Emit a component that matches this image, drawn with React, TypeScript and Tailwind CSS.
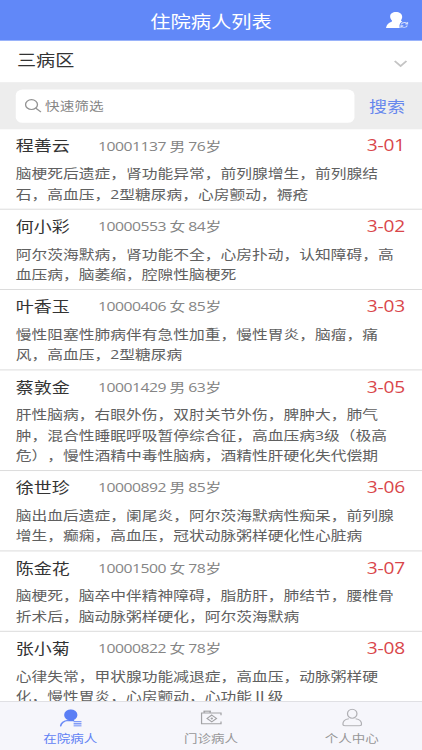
import React from 'react';

type Patient = { name: string; id: string; sex: string; age: number; bed: string; lines: string[] };

const patients: Patient[] = [
  { name: '程善云', id: '10001137', sex: '男', age: 76, bed: '3-01', lines: ['脑梗死后遗症，肾功能异常，前列腺增生，前列腺结', '石，高血压，2型糖尿病，心房颤动，褥疮'] },
  { name: '何小彩', id: '10000553', sex: '女', age: 84, bed: '3-02', lines: ['阿尔茨海默病，肾功能不全，心房扑动，认知障碍，高', '血压病，脑萎缩，腔隙性脑梗死'] },
  { name: '叶香玉', id: '10000406', sex: '女', age: 85, bed: '3-03', lines: ['慢性阻塞性肺病伴有急性加重，慢性胃炎，脑瘤，痛', '风，高血压，2型糖尿病'] },
  { name: '蔡敦金', id: '10001429', sex: '男', age: 63, bed: '3-05', lines: ['肝性脑病，右眼外伤，双肘关节外伤，脾肿大，肺气', '肿，混合性睡眠呼吸暂停综合征，高血压病3级（极高', '危），慢性酒精中毒性脑病，酒精性肝硬化失代偿期'] },
  { name: '徐世珍', id: '10000892', sex: '男', age: 85, bed: '3-06', lines: ['脑出血后遗症，阑尾炎，阿尔茨海默病性痴呆，前列腺', '增生，癫痫，高血压，冠状动脉粥样硬化性心脏病'] },
  { name: '陈金花', id: '10001500', sex: '女', age: 78, bed: '3-07', lines: ['脑梗死，脑卒中伴精神障碍，脂肪肝，肺结节，腰椎骨', '折术后，脑动脉粥样硬化，阿尔茨海默病'] },
  { name: '张小菊', id: '10000822', sex: '女', age: 78, bed: '3-08', lines: ['心律失常，甲状腺功能减退症，高血压，动脉粥样硬', '化，慢性胃炎，心房颤动，心功能Ⅱ级'] },
];

function UserSwitchIcon() {
  return (
    <svg className="h-[18px] w-[20px]" viewBox="0 0 20 18" fill="none">
      <path d="M8.800 0C5.900 0 3.700 1.900 3.700 4.800c0 1.900.8 3.200 1.600 4.300.3.500.1 1.100-.4 1.400C2.200 12 .6 13.400 0 17.400h12.200c-.7-3.600.2-6 2.400-7.200-.8-.3-1.500-.6-1.100-1.400.5-1 .9-2.100.9-3.600C14.400 1.900 12 0 8.800 0Z" fill="#fff" />
      <path d="M13.500 13.300c.5-1.400 1.600-2 2.900-2 1.100 0 1.900.5 2.400 1.200M19.300 10.700v2.300h-2.100M19 14.600c-.5 1.400-1.500 2-2.800 2-1.100 0-1.900-.5-2.400-1.200M13.300 17.200v-2.300h2.100" stroke="#d3defd" strokeWidth="1" />
    </svg>
  );
}

function InpatientIcon() {
  return (
    <svg className="h-[19px] w-[20px]" viewBox="0 0 20 19">
      <ellipse cx="9.900" cy="6.200" rx="5.900" ry="6.200" fill="#5b7ff5" />
      <path d="M7.500 11h4.800l1 1.800H7Z" fill="#5b7ff5" />
      <path d="M.9 18C1.400 14.600 3.300 12.600 7.500 11.900" fill="none" stroke="#6e8df6" strokeWidth="1.500" strokeLinecap="round" />
      <path d="M12.400 12.600h7v1.500h-7zM12.400 14.900h7v1.500h-7zM12.400 17.200h7v1.500h-7z" fill="#7f9af7" />
    </svg>
  );
}

function ClinicIcon() {
  return (
    <svg className="h-[16px] w-[20px]" viewBox="0 0 20 16" fill="none" stroke="#a2a2a5" strokeWidth="1.100">
      <path d="M3.500 2.800V1h5.200v1.800" strokeWidth="1.500" />
      <path d="M18.400 5.500V3H1.100V14.700H18.400V12.200" />
      <path d="M10.200 5.200 14.400 8.900 10.200 12.600 6 8.900ZM9.200 8.900h2M10.200 7.900v2" />
    </svg>
  );
}

function PersonIcon() {
  return (
    <svg className="h-[20px] w-[18px]" viewBox="0 0 18 20" fill="none" stroke="#b0b0b4" strokeWidth="1.100">
      <ellipse cx="9" cy="5.700" rx="4.200" ry="4.900" />
      <path d="M6 11.200C2.500 11.800.7 13.700.7 17c0 1.300.7 1.900 2 1.900h12.600c1.300 0 2-.6 2-1.900 0-3.300-1.800-5.200-5.300-5.800" />
    </svg>
  );
}

function Row({ p }: { p: Patient }) {
  return (
    <li className="shrink-0 border-b border-[#d9d9d9] px-[14px] pb-[5px]">
      <div className="flex h-[37px] items-center pb-[2px]">
        <span className="w-[73px] text-base text-[#333]">{p.name}</span>
        <span className="flex-1 pt-[1px] text-sm tracking-[-0.45px] text-[#858585]">
          {p.id} {p.sex} {p.age}岁
        </span>
        <span className="w-[35px] text-[17px] tracking-[-0.2px] text-[#d9464a]">{p.bed}</span>
      </div>
      <div className="text-sm leading-[22px] text-[#606060]">
        {p.lines.map((line) => (
          <p key={line}>{line}</p>
        ))}
      </div>
    </li>
  );
}

export default function App() {
  return (
    <div className="h-[750px] w-[422px] overflow-hidden bg-white">
      <div className="flex h-[812px] w-[375px] origin-top-left scale-x-[1.1253] scale-y-[0.9236] flex-col whitespace-nowrap bg-white font-['Open_Sans','Noto_Sans_CJK_SC',sans-serif] [text-spacing-trim:space-all]">
        <header className="grid h-[44px] shrink-0 grid-cols-[1fr_auto_1fr] items-center bg-[#6188f8] px-[12px] text-white">
          <span />
          <h1 className="pt-px text-lg">住院病人列表</h1>
          <span className="justify-self-end">
            <UserSwitchIcon />
          </span>
        </header>

        <div className="flex h-[45px] shrink-0 items-center justify-between pl-[15px] pr-[13px]">
          <span className="pb-px text-[17px] text-[#333]">三病区</span>
          <svg className="mt-1 h-[8px] w-[12px]" viewBox="0 0 12 8" fill="none" stroke="#c4c4c4" strokeWidth="1.800">
            <path d="m.8 1 5.200 5.500L11.200 1" />
          </svg>
        </div>

        <div className="flex h-[51px] shrink-0 items-center bg-[#ededed] pl-[14px] pr-[15px]">
          <div className="flex h-[36px] w-[301px] items-center rounded-[6px] bg-white pl-[8px]">
            <svg className="h-[15px] w-[15px]" viewBox="0 0 15 15" fill="none" stroke="#929292" strokeWidth="1.200">
              <circle cx="6" cy="6.200" r="5.300" />
              <path d="m9.900 10.200 4.600 4.300" />
            </svg>
            <span className="ml-[3px] pt-[2px] text-[13px] text-[#858585]">快速筛选</span>
          </div>
          <button className="ml-auto text-base text-[#6687ed]">搜索</button>
        </div>

        <ul className="flex min-h-0 flex-1 flex-col overflow-hidden">
          {patients.map((p) => (
            <Row key={p.id} p={p} />
          ))}
        </ul>

        <nav className="grid h-[53px] shrink-0 grid-cols-3 border-t border-[#dedee2] bg-[#f6f6fb] text-xs text-[#969698]">
          <div className="flex flex-col items-center">
            <span className="flex h-[32px] items-center pt-[2px]"><InpatientIcon /></span>
            <span className="leading-[18px] text-[#6182f5]">在院病人</span>
          </div>
          <div className="flex flex-col items-center">
            <span className="flex h-[32px] items-center pt-[2px]"><ClinicIcon /></span>
            <span className="leading-[18px]">门诊病人</span>
          </div>
          <div className="flex flex-col items-center">
            <span className="flex h-[32px] items-center pt-[2px]"><PersonIcon /></span>
            <span className="leading-[18px]">个人中心</span>
          </div>
        </nav>
      </div>
    </div>
  );
}
